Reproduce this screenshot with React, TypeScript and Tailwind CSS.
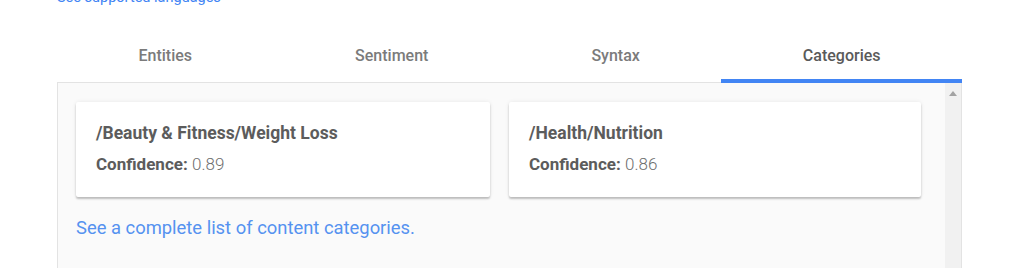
const tabs = ['Entities', 'Sentiment', 'Syntax', 'Categories'];

const categories = [
  { name: '/Beauty & Fitness/Weight Loss', confidence: '0.89', width: 'w-[414px]' },
  { name: '/Health/Nutrition', confidence: '0.86', width: 'w-[412px]' },
];

export default function App() {
  const active = 'Categories';

  return (
    <div className="h-[268px] overflow-hidden bg-white font-['Roboto',sans-serif]">
      <div className="ml-[57px] w-[905px]">
        {/* Languages link (cut off at the top) */}
        <a className="-mt-[12px] block h-[20px] text-[14.5px] leading-[20px] text-[#4285f4]">
          See supported languages
        </a>

        {/* Tabs */}
        <div className="mt-[23px] flex h-[51px]">
          {tabs.map((tab) => (
            <button
              key={tab}
              className={`relative flex flex-auto items-center justify-center px-6 pb-[2px] text-[16px] font-medium ${
                tab === active ? 'text-[#5a5a5a]' : 'text-[#7b7b7b]'
              }`}
            >
              {tab}
              {tab === active && (
                <span className="absolute -bottom-px left-0 right-0 z-10 h-[4px] bg-[#4285f4]" />
              )}
            </button>
          ))}
        </div>

        {/* Result panel */}
        <div className="flex h-[240px] border-l border-r border-t border-[#e3e3e3] bg-[#fafafa]">
          <div className="flex-1 pl-[18px] pt-[19px]">
            <div className="flex gap-[19px]">
              {categories.map((c) => (
                <div
                  key={c.name}
                  className={`${c.width} h-[95px] rounded-[2px] bg-white px-5 pt-[19px] shadow-[0_2px_2px_rgba(0,0,0,0.22),0_0_4px_rgba(0,0,0,0.08)]`}
                >
                  <p className="text-[17.5px] font-bold leading-6 text-[#5c5c5c]">{c.name}</p>
                  <p className="mt-[7px] text-[17px] leading-6 text-[#5c5c5c]">
                    <span className="font-bold">Confidence:</span>{' '}
                    <span className="font-light text-[#6e6e6e]">{c.confidence}</span>
                  </p>
                </div>
              ))}
            </div>
            <a className="mt-[17px] block text-[18.4px] leading-[27px] text-[#5592f0]">
              See a complete list of content categories.
            </a>
          </div>

          {/* Scrollbar */}
          <div className="w-[16px] bg-[#f1f1f1]">
            <div className="flex h-[17px] items-center justify-center pt-[4px]">
              <svg width="8" height="5" viewBox="0 0 8 5">
                <path d="M0 5 L4 0 L8 5 Z" fill="#a3a3a3" />
              </svg>
            </div>
          </div>
        </div>
      </div>
    </div>
  );
}
